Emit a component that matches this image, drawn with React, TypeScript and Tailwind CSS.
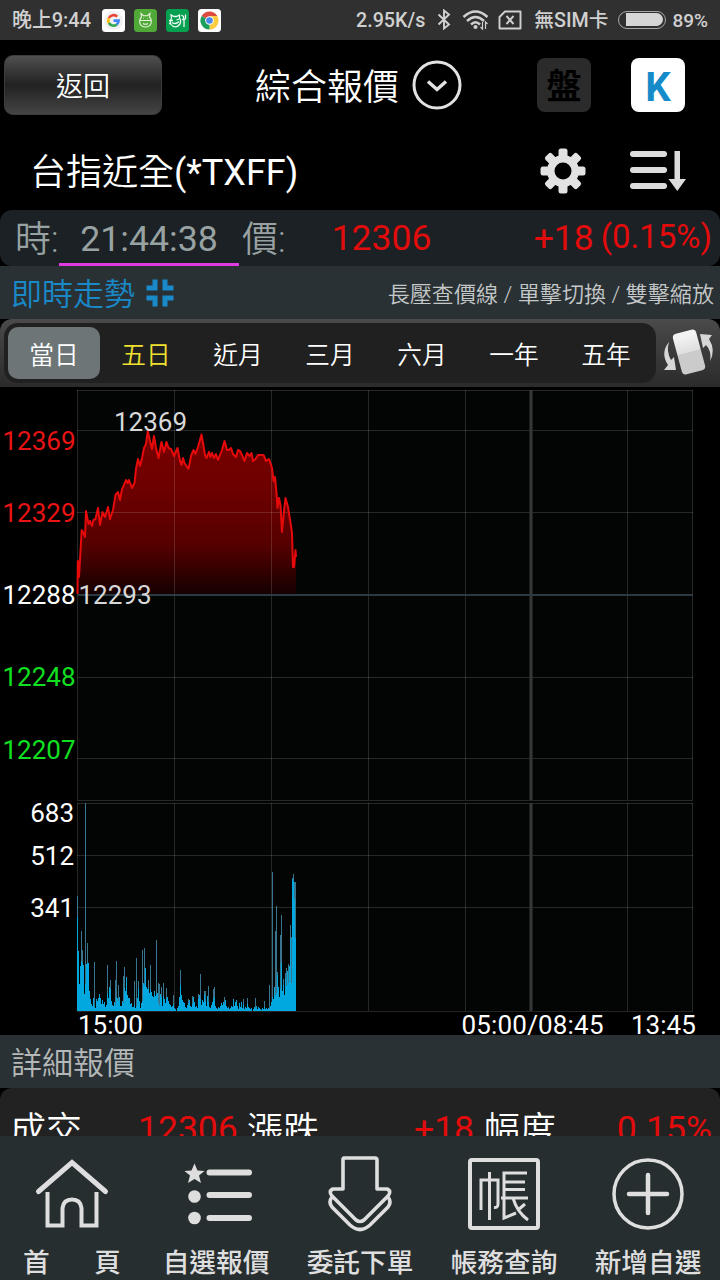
import type { ReactNode } from "react";

type Point = [number, number];

const ranges = ["當日", "五日", "近月", "三月", "六月", "一年", "五年"];

const priceLine: Point[] = [
  [77.5, 594], [77.8, 561], [79, 577], [80, 560], [81.7, 530], [83, 532], [85, 537], [86, 511], [88.5, 524], [90, 521],
  [92, 526], [93.5, 520], [95.5, 519], [98, 508], [100, 525], [102.5, 512], [105, 517], [108, 507], [110, 519], [113, 510],
  [115.5, 495], [118, 492], [120, 500], [122, 489], [124, 485], [126, 480], [127.5, 483], [129, 480], [132, 488], [134.5, 483],
  [136, 469], [138, 459], [140, 466], [142, 458], [144, 448], [146, 444], [147.8, 431], [150, 441], [152, 449], [154, 436],
  [156, 448], [158.5, 458], [161.5, 442], [164, 452], [166.5, 442], [168.5, 448], [171, 449], [174, 456], [177.5, 448], [180, 461],
  [181.5, 465], [183, 458], [184.5, 463], [188.5, 469], [191, 456], [193.5, 450], [195.5, 454], [198, 447], [201.5, 434.5], [203.5, 446],
  [205, 455], [206.5, 458], [209, 452], [210.5, 457], [212, 453], [214, 458], [216, 454], [218, 460], [220, 455], [222, 450],
  [224.5, 441], [227, 450], [229, 450], [231, 448], [233, 454], [236, 457], [238, 450], [240, 451], [242, 455], [244.5, 461],
  [247, 453], [249.5, 456], [251.5, 453], [253, 461], [255.5, 459], [258, 455], [263.5, 455], [266, 461], [269, 459], [272, 468],
  [273.5, 481], [275, 477], [276.5, 493], [277.5, 508], [279, 498], [280.5, 505], [282, 532], [284, 511], [285.5, 498], [288, 507],
  [291, 526], [292, 533], [293, 567], [294, 567], [295.5, 550], [296, 557],
];

// one entry per column, drawn at full strength
const volumeSolid = [
  94, 60, 27, 45, 50, 48, 46, 17, 27, 47, 48, 48, 20, 12, 7, 5, 13, 4, 3, 12, 10, 13, 17, 13, 7, 11, 7, 9, 4, 6, 18, 13, 24, 22,
  10, 6, 5, 9, 6, 14, 13, 10, 14, 5, 5, 10, 8, 23, 20, 34, 16, 13, 13, 7, 8, 4, 4, 6, 3, 5, 13, 23, 10, 3, 8, 10, 28, 26, 43, 24,
  22, 23, 18, 22, 19, 15, 14, 20, 15, 17, 18, 8, 5, 17, 14, 5, 15, 12, 8, 12, 14, 10, 7, 6, 4, 5, 7, 3, 2, 0, 3, 5, 14, 26, 16, 11,
  9, 8, 4, 3, 6, 8, 11, 5, 4, 7, 14, 9, 4, 5, 3, 12, 16, 12, 6, 11, 9, 16, 10, 5, 15, 9, 4, 3, 6, 9, 12, 14, 5, 3, 2, 4, 3, 5, 8, 6,
  9, 7, 11, 5, 3, 4, 2, 3, 5, 4, 12, 5, 9, 10, 5, 2, 8, 4, 9, 3, 7, 2, 4, 3, 7, 4, 3, 2, 3, 0, 2, 4, 3, 5, 2, 4, 3, 2, 1, 3, 2, 4, 2,
  3, 2, 3, 2, 5, 9, 14, 12, 24, 16, 18, 36, 24, 14, 22, 48, 20, 26, 16, 33, 25, 40, 28, 45, 73, 28, 132, 130, 112, 73,
];

// thin spikes rising above the solid part
const volumeSpikes: Point[] = [
  [0, 115], [4, 80], [5, 61], [8, 208], [10, 68], [17, 49], [30, 46], [33, 31], [38, 31], [39, 50], [41, 26], [46, 35], [47, 44],
  [49, 34], [57, 30], [59, 53], [61, 30], [65, 61], [67, 63], [71, 31], [73, 46], [79, 71], [81, 28], [82, 27], [84, 24], [86, 28],
  [89, 23], [96, 16], [103, 41], [111, 12], [115, 15], [121, 17], [123, 37], [127, 20], [128, 20], [131, 25], [136, 22], [137, 24],
  [147, 14], [156, 12], [159, 11], [166, 12], [170, 13], [178, 13], [187, 10], [192, 26], [195, 139], [198, 80], [199, 105],
  [200, 39], [203, 76], [204, 96], [206, 32], [208, 38], [209, 43], [211, 47], [213, 86], [214, 74], [215, 133], [216, 137], [217, 129], [218, 129],
];

const linePath = "M" + priceLine.map(([x, y]) => `${x} ${y}`).join("L");

const PriceChart = () => (
  <svg
    className="block h-[648px] w-[720px] overflow-visible bg-black"
    viewBox="0 387 720 648"
    fontFamily="Roboto, 'Liberation Sans', sans-serif"
    fontSize="26"
  >
    <defs>
      <linearGradient id="fall" x1="0" y1="430" x2="0" y2="594" gradientUnits="userSpaceOnUse">
        <stop offset="0" stopColor="#780000" />
        <stop offset="0.35" stopColor="#6e0000" />
        <stop offset="0.7" stopColor="#560000" />
        <stop offset="1" stopColor="#150000" />
      </linearGradient>
    </defs>
    <rect x="77" y="390" width="616" height="621" fill="#020504" />
    <path d={`${linePath}L296 594H77.5Z`} fill="url(#fall)" />
    <g stroke="#ffffff" strokeOpacity="0.14" fill="none">
      {[77.5, 174.5, 271.5, 368.5, 465.5, 627.5, 692.5].map((x) => (
        <path key={x} d={`M${x} 390V800M${x} 803V1011`} />
      ))}
      {[390.5, 430.5, 512.5, 677.5, 758.5, 800.5, 803.5, 855.5, 907.5, 1011.5].map((y) => (
        <path key={y} d={`M77 ${y}H693`} />
      ))}
    </g>
    <path d="M531 390V800M531 803V1011" stroke="#383838" strokeWidth="3" />
    <path d="M77 595H693" stroke="#2d3a42" strokeWidth="2" />
    <path d={linePath} stroke="#e60a0a" strokeWidth="2" fill="none" strokeLinejoin="round" />
    <g fill="#387690">
      {volumeSpikes.map(([x, h]) => (
        <rect key={x} x={77 + x} y={1011 - h} width="1" height={h} />
      ))}
    </g>
    <g fill="#00a8df">
      {volumeSolid.slice(0, 219).map((h, i) => (
        <rect key={i} x={77 + i} y={1011 - h} width="1" height={h} />
      ))}
    </g>
    <g textAnchor="end">
      <text x="75.5" y="450" fill="#e81414">12369</text>
      <text x="75.5" y="522" fill="#e81414">12329</text>
      <text x="75.5" y="604" fill="#fff">12288</text>
      <text x="75.5" y="686" fill="#10e020">12248</text>
      <text x="75.5" y="759" fill="#10e020">12207</text>
      <text x="74" y="822" fill="#fff">683</text>
      <text x="74" y="865" fill="#fff">512</text>
      <text x="74" y="917" fill="#fff">341</text>
    </g>
    <text x="114" y="431" fill="#d8d8d8">12369</text>
    <text x="78.5" y="604" fill="#d8d8d8">12293</text>
    <g fill="#fff">
      <text x="78" y="1033.5">15:00</text>
      <text x="461.5" y="1033.5" textLength="142">05:00/08:45</text>
      <text x="631" y="1033.5">13:45</text>
    </g>
  </svg>
);

const StatusBar = () => (
  <div className="flex h-10 items-center bg-[#303030] px-3 text-[19.7px] font-medium text-[#d0d0d0]">
    <span className="w-[90px] whitespace-nowrap pt-0.5 text-[19.9px]">晚上9:44</span>
    <div className="flex gap-[9px]">
      <svg width="23" height="23" viewBox="0 0 23 23">
        <rect width="23" height="23" rx="3.5" fill="#fff" />
        <circle cx="11.5" cy="11.5" r="9.5" fill="#f1f1f1" />
        <g fill="none" strokeWidth="2.6">
          <path d="M15.2 7.6A5.2 5.2 0 0 0 6.9 9" stroke="#ea4335" />
          <path d="M6.9 9A5.2 5.2 0 0 0 6.9 14" stroke="#fbbc05" />
          <path d="M6.9 14A5.2 5.2 0 0 0 14.8 15.4" stroke="#34a853" />
          <path d="M14.8 15.4A5.2 5.2 0 0 0 16.6 11.6H11.5" stroke="#4285f4" />
        </g>
      </svg>
      <svg width="23" height="23" viewBox="0 0 23 23">
        <rect width="23" height="23" rx="3.5" fill="#4fa838" />
        <path
          d="M7.5 8 7 4.5 9.5 6.7h4L16 4.5 15.5 8Q18 10.5 17 14.5 15.5 18 11.5 18T6 14.5Q5 10.5 7.5 8ZM5.7 11.5H17.3M9 14.5q2.5 1.5 5 0M9.3 9.2h.6M13.2 9.2h.6"
          fill="none"
          stroke="#e8f5dc"
          strokeWidth="1.1"
        />
      </svg>
      <svg width="23" height="23" viewBox="0 0 23 23">
        <rect width="23" height="23" rx="3.5" fill="#05a050" />
        <path
          d="M5.5 9 5 6 8 7.5h2.5L13.5 6v3Q15.5 12 14 15 12 17.8 9.3 17.8T4.7 15Q3.5 12 5.5 9ZM3 11.5h4M6 13.5q3.5 2.5 7-1M10.5 11l2.5-1M3 14.5h2M15.5 6l2 1.5V10l-1.5 1M18 10.5V18M19.5 5.5V9.5L18 11"
          fill="none"
          stroke="#eefaf3"
          strokeWidth="1.3"
        />
      </svg>
      <svg width="23" height="23" viewBox="0 0 23 23">
        <rect width="23" height="23" rx="3.5" fill="#fff" />
        <path d="M11.5 11.5 3.7 7A9 9 0 0 1 19.3 7Z" fill="#dd4b3e" />
        <path d="M11.5 11.5 19.3 7A9 9 0 0 1 11.5 20.5Z" fill="#fccd3f" />
        <path d="M11.5 11.5V20.5A9 9 0 0 1 3.7 7Z" fill="#1da05d" />
        <path d="M11.5 7H19.3L15 14Z" fill="#fccd3f" />
        <circle cx="11.5" cy="11.5" r="4.3" fill="#fff" />
        <circle cx="11.5" cy="11.5" r="3.3" fill="#4a89ed" />
      </svg>
    </div>
    <div className="ml-auto flex items-center">
      <span className="mr-3 pt-0.5">2.95K/s</span>
      <svg width="14" height="21" viewBox="0 0 14 21" className="mr-[11px]" fill="none" stroke="#d0d0d0" strokeWidth="1.9">
        <path d="M1.5 5.5 12 15.5 7 19.5V1.5L12 5.5 1.5 15.5" />
      </svg>
      <svg width="28" height="22" viewBox="0 0 28 22" className="mr-[8px]" fill="none" stroke="#d0d0d0" strokeWidth="2.5">
        <path d="M1.5 8Q13.5-3 25.5 8M5 12Q13.5 4 22 12M9 15.5Q13.5 11 18 15.5" />
        <circle cx="13.5" cy="18" r="2.1" fill="#d0d0d0" stroke="none" />
        <path d="M20.5 13v7l-2-2M23.5 20v-7l2 2" strokeWidth="1.2" />
      </svg>
      <svg width="24" height="20" viewBox="0 0 24 20" className="mr-3" fill="none" stroke="#d0d0d0" strokeWidth="1.9">
        <path d="M7 1.5H22.5V18.5H1.5V7Z" strokeLinejoin="round" />
        <path d="M8.5 6 15.5 14M15.5 6 8.5 14" />
      </svg>
      <span className="mr-[10px] whitespace-nowrap pt-0.5">無SIM卡</span>
      <span className="mr-[6px] flex h-[18px] w-12 items-center justify-end rounded-full border-[1.5px] border-[#a8a8a8] px-[2px]">
        <span className="h-[13px] w-[37px] rounded-l-sm rounded-r-full bg-[#d6d6d6]" />
      </span>
      <span className="pt-0.5 text-[19px]">89%</span>
    </div>
  </div>
);

const NavItem = ({ label, children }: { label: ReactNode; children: ReactNode }) => (
  <div className="flex flex-1 flex-col items-center">
    <svg
      width="84"
      height="94"
      viewBox="0 0 84 94"
      className="mt-2 shrink-0"
      fill="none"
      stroke="#dedede"
      strokeWidth="4"
    >
      {children}
    </svg>
    <div className="mt-[11px] whitespace-nowrap text-[26.7px] leading-[29px] font-medium text-[#dedede]">{label}</div>
  </div>
);

const App = () => {
  return (
    <div className="flex h-[1280px] w-[720px] flex-col overflow-hidden bg-black font-[Roboto,'Noto_Sans_CJK_TC',sans-serif] text-white">
      <StatusBar />

      <header className="flex h-[90px] items-center pl-1 pr-[35px]">
        <button className="h-[60px] w-[158px] rounded-[9px] border border-[#3c3c3c] bg-linear-to-b from-[#505050] via-[#222] to-[#454545] pt-[5px] text-[27px] font-[350]">
          返回
        </button>
        <h1 className="ml-[93px] pt-1.5 text-4xl font-[350]">綜合報價</h1>
        <svg width="50" height="50" viewBox="0 0 50 50" className="ml-[13px]" fill="none" stroke="#e2e2e2">
          <circle cx="25" cy="25" r="23" strokeWidth="3" />
          <path d="M16 21.5 25 29.5 34 21.5" strokeWidth="3.5" />
        </svg>
        <div className="ml-auto flex gap-10">
          <span className="flex h-[54px] w-[54px] items-center justify-center rounded-lg bg-[#2b2b2b] pt-[7px] text-[35px] font-bold text-black">
            盤
          </span>
          <span className="flex h-[54px] w-[54px] items-center justify-center rounded-lg bg-white pt-[5px] text-[40px] font-bold text-[#168bc9]">
            K
          </span>
        </div>
      </header>

      <div className="flex h-20 items-center pl-[30px] pr-[33px]">
        <h2 className="pt-[5px] text-4xl font-[350]">
          台指近全<span className="font-normal">(*TXFF)</span>
        </h2>
        <svg width="46" height="46" viewBox="0 0 46 46" className="ml-auto mr-[43px] mt-0.5" fill="#e2e2e2">
          {[0, 45, 90, 135].map((angle) => (
            <rect key={angle} x="18.5" y="0.5" width="9" height="45" rx="2.5" transform={`rotate(${angle} 23 23)`} />
          ))}
          <circle cx="23" cy="23" r="16" />
          <circle cx="23" cy="23" r="8.5" fill="#000" />
        </svg>
        <svg width="58" height="44" viewBox="0 0 58 44" className="mt-0.5" fill="#dcdcdc">
          <rect x="1" y="2" width="37" height="6" rx="3" />
          <rect x="1" y="18" width="37" height="6" rx="3" />
          <rect x="1" y="34" width="37" height="6" rx="3" />
          <path d="M45.5 2h5.5v28h6L48.3 42 39.5 30h6Z" />
        </svg>
      </div>

      <div className="flex h-14 items-center rounded-xl bg-[#1b2124] text-4xl text-[#98a2a2]">
        <span className="w-[59px] pt-1 pl-[15px] font-[350]">時:</span>
        <span className="flex h-full w-[180px] items-center justify-center border-b-[3px] border-[#e03ae0] pt-[6px] text-[35.7px]">
          21:44:38
        </span>
        <span className="pt-1 pl-[3px] font-[350]">價:</span>
        <span className="ml-auto w-[100px] pt-0.5 text-[35.5px] text-[#e20c0c]">12306</span>
        <span className="ml-[102px] pt-0.5 text-[35.5px] text-[#e20c0c]">+18</span>
        <span className="ml-[7px] mr-[8px] -mt-px text-[33px] text-[#e20c0c]">(0.15%)</span>
      </div>

      <div className="flex h-[53px] items-center bg-[#2a3134] pl-[11px] pr-[6px]">
        <span className="pt-[5px] text-[31px] font-[350] text-[#1989c8]">即時走勢</span>
        <svg width="28" height="28" viewBox="0 0 28 28" className="ml-[11px]" fill="none" stroke="#1989c8" strokeWidth="5">
          <path d="M0.5 9H9V0.5M27.5 9H19V0.5M0.5 19H9V27.5M27.5 19H19V27.5" />
        </svg>
        <span className="ml-auto pt-1 text-[22.1px] font-[350] text-[#c4c8c8]">長壓查價線 / 單擊切換 / 雙擊縮放</span>
      </div>

      <div className="flex h-[68px] items-center rounded-t-xl bg-linear-to-b from-[#4a4a4a] to-[#2b2b2b] pl-1">
        <div className="flex h-[60px] w-[652px] items-center rounded-[14px] bg-[#202020] pl-1">
          {ranges.map((range, i) => (
            <button
              key={range}
              className={`h-[52px] w-[92px] rounded-[10px] pt-[5px] text-[24.7px] font-[350] ${
                i === 0 ? "bg-[#6d7577]" : i === 1 ? "text-[#f0e130]" : ""
              }`}
            >
              {range}
            </button>
          ))}
        </div>
        <svg width="58" height="54" viewBox="0 0 58 54" className="ml-[3px]">
          <defs>
            <linearGradient id="phone" x1="0" y1="0" x2="0" y2="1">
              <stop offset="0.1" stopColor="#f4f4f4" />
              <stop offset="0.5" stopColor="#dedede" />
              <stop offset="0.51" stopColor="#cbcbcb" />
            </linearGradient>
          </defs>
          <path d="M10 16Q7 25 12 34L15 31 17 44H5L9 39Q1 27 10 16Z" fill="#d6d6d6" />
          <path d="M51 35Q53 25 47 19L44 22 41 8 53 9 50 13Q57 24 51 35Z" fill="#d6d6d6" />
          <rect x="18" y="5" width="24" height="42" rx="4" fill="url(#phone)" transform="rotate(-15 30 26)" />
        </svg>
      </div>

      <PriceChart />

      <div className="relative flex h-[53px] items-center bg-[#2a3134] pt-1.5 pl-[11px] text-[31px] font-[350] text-[#b4b8b8]">
        詳細報價
      </div>

      <div className="h-12 overflow-hidden rounded-t-xl bg-[#222]">
        <div className="flex items-center pt-4 text-4xl leading-[54px] font-[350]">
          <span className="w-[138px] pl-[10px]">成交</span>
          <span className="-mt-1 w-[109px] text-[35.5px] font-normal text-[#e20c0c]">12306</span>
          <span className="w-[167px]">漲跌</span>
          <span className="-mt-1 w-[70px] text-[35.5px] font-normal text-[#e20c0c]">+18</span>
          <span>幅度</span>
          <span className="-mt-1 ml-auto pr-2 text-[35.5px] font-normal text-[#e20c0c]">0.15%</span>
        </div>
      </div>

      <nav className="flex h-36 bg-[#272e30]">
        <NavItem
          label={
            <span className="flex w-[98px] justify-between">
              <span>首</span>
              <span>頁</span>
            </span>
          }
        >
          <path d="M8.5 47.5 42 18.5 75.5 47.5" strokeWidth="5" strokeLinecap="round" />
          <path d="M17.5 48V81.5H32.5V64Q33.5 55.5 42 55.5T51.5 64V81.5H66.5V48" />
        </NavItem>
        <NavItem label="自選報價">
          <path d="M35.5 28.5H75M35.5 51H75M35.5 74H75" strokeWidth="6" strokeLinecap="round" />
          <path d="M20.5 19.5 23.5 26.5 30.5 27 25 31.5 27 39 20.5 35 14 39 16 31.5 10.5 27 17.5 26.5Z" fill="#dedede" stroke="none" />
          <circle cx="20.5" cy="52.5" r="6.3" fill="#dedede" stroke="none" />
          <circle cx="20.5" cy="74" r="6.3" fill="#dedede" stroke="none" />
        </NavItem>
        <NavItem label="委託下單">
          <path
            d="M26 14H57Q59 14 59 16V45H69Q74 47 70 52L46 76Q42 79 38 76L14 52Q10 47 15 45H25V16Q25 14 26 14Z"
            strokeWidth="3.6"
            strokeLinejoin="round"
          />
          <path d="M14 53Q10 58 14 63L32 81Q42 90 52 81L70 63Q74 58 70 53" strokeWidth="3.6" />
        </NavItem>
        <NavItem label="帳務查詢">
          <rect x="8" y="16" width="68" height="68" rx="2" />
          <path
            d="M19 66V36H36V60Q36 64 32 63.5M27.5 28V76M42 54V29H65M42 38H63M42 45.5H63M39 54H66M42 54V74L54 69M51 54Q55 68 66 76M63 60 56 66"
            strokeWidth="3"
          />
        </NavItem>
        <NavItem label="新增自選">
          <circle cx="42" cy="50" r="34" strokeWidth="3.5" />
          <path d="M42 31V69M23 50H61" strokeWidth="4.5" strokeLinecap="round" />
        </NavItem>
      </nav>
    </div>
  );
};

export default App;
